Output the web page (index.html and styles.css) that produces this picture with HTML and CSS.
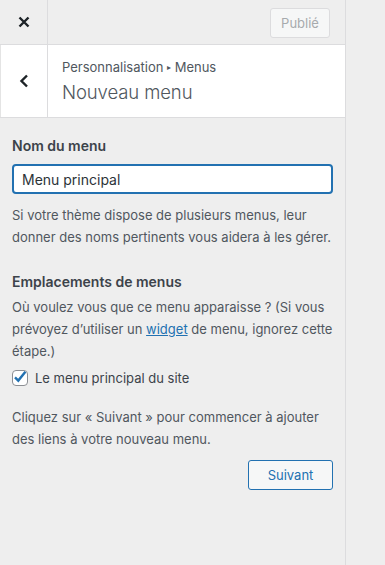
FILE: index.html
```html
<!DOCTYPE html>
<html lang="fr">
<head>
    <meta charset="UTF-8">
    <title>Personnalisation</title>
    <link rel="stylesheet" href="styles.css">
</head>
<body>
    <div class="sidebar">
        <div class="header">
            <button class="close" type="button" aria-label="Fermer">
                <svg width="14" height="14" viewBox="0 0 14 14"><path d="M2.5 2.5 11.5 11.5M11.5 2.5 2.5 11.5" stroke="#1d2327" stroke-width="2.4" stroke-linecap="butt"/></svg>
            </button>
            <div class="header-actions">
                <button class="publish" type="button" disabled>Publié</button>
            </div>
        </div>

        <div class="section-title">
            <button class="back" type="button" aria-label="Retour">
                <svg width="12" height="16" viewBox="0 0 12 16"><path d="M9 2.5 3.5 8 9 13.5" fill="none" stroke="#1d2327" stroke-width="2.4"/></svg>
            </button>
            <div class="title-text">
                <span class="crumb">Personnalisation <span class="arrow">▸</span> Menus</span>
                <h2>Nouveau menu</h2>
            </div>
        </div>

        <div class="content">
            <label class="field-label" for="menu-name">Nom du menu</label>
            <input type="text" id="menu-name" value="Menu principal">
            <p class="desc">Si votre thème dispose de plusieurs menus, leur donner des noms pertinents vous aidera à les gérer.</p>

            <h3>Emplacements de menus</h3>
            <p class="desc">Où voulez vous que ce menu apparaisse ? (Si vous prévoyez d’utiliser un <a href="#">widget</a> de menu, ignorez cette étape.)</p>
            <label class="check">
                <span class="box">
                    <svg width="16" height="16" viewBox="0 0 16 16"><path d="M3 8.4 6.3 11.6 13.4 2.8" fill="none" stroke="#2271b1" stroke-width="2.4"/></svg>
                </span>
                Le menu principal du site
            </label>

            <p class="desc next-hint">Cliquez sur « Suivant » pour commencer à ajouter des liens à votre nouveau menu.</p>
            <div class="actions">
                <button class="next" type="button">Suivant</button>
            </div>
        </div>
    </div>
    <div class="preview"></div>
</body>
</html>
```

FILE: styles.css
```css
body {
    margin: 0;
    display: flex;
    height: 565px;
    overflow: hidden;
    background: #eeeeee;
    font-family: Inter, "Liberation Sans", Arial, sans-serif;
    color: #3c434a;
}
button {
    font-family: inherit;
}
.sidebar {
    width: 345px;
    flex-shrink: 0;
    background: #eeeeee;
    border-right: 1px solid #dcdcde;
}
.preview {
    flex: 1;
}
.header {
    display: flex;
    height: 44px;
    border-bottom: 1px solid #dcdcde;
}
.close {
    width: 48px;
    border: none;
    border-right: 1px solid #dcdcde;
    background: transparent;
    display: flex;
    align-items: center;
    justify-content: center;
    padding: 0;
}
.header-actions {
    flex: 1;
    display: flex;
    justify-content: flex-end;
    align-items: center;
    padding-right: 15px;
}
.publish {
    height: 30px;
    width: 60px;
    margin-top: 1px;
    border: 1px solid #dcdcde;
    border-radius: 3px;
    background: #f6f7f7;
    color: #a7aaad;
    font-size: 13px;
    padding: 0;
}
.section-title {
    display: flex;
    background: #fff;
    height: 72px;
    border-bottom: 1px solid #dcdcde;
}
.back {
    width: 48px;
    border: none;
    border-left: 1px solid #e4e4e4;
    border-right: 1px solid #dcdcde;
    background: #fff;
    display: flex;
    align-items: center;
    justify-content: center;
    padding: 0;
}
.title-text {
    padding: 14px 14px 0;
}
.crumb {
    display: block;
    font-size: 13px;
    color: #50575e;
    line-height: 16px;
}
.arrow {
    font-size: 8px;
    vertical-align: 2px;
}
.title-text h2 {
    margin: 3px 0 0;
    font-size: 18.5px;
    font-weight: 300;
    letter-spacing: -0.1px;
    color: #50575e;
    line-height: 28px;
}
.content {
    padding: 18px 12px;
}
.field-label,
.content h3 {
    display: block;
    font-size: 14px;
    font-weight: 600;
    color: #3c434a;
    margin: 0 0 8px;
    line-height: 20px;
}
.content input {
    display: block;
    box-sizing: border-box;
    width: 100%;
    height: 30px;
    border: 2px solid #2271b1;
    border-radius: 4px;
    padding: 0 8px;
    font-family: inherit;
    font-size: 14px;
    color: #2c3338;
    outline: none;
}
.desc {
    font-size: 13px;
    line-height: 22px;
    margin: 10px 0 0;
    color: #50575e;
}
.content h3 {
    margin-top: 24px;
    margin-bottom: 0;
}
.content h3 + .desc {
    margin-top: 4px;
}
.desc a {
    color: #2271b1;
}
.check {
    display: flex;
    align-items: center;
    gap: 7px;
    font-size: 13px;
    margin-top: 8px;
    color: #3c434a;
}
.box {
    position: relative;
    width: 16px;
    height: 16px;
    box-sizing: border-box;
    border: 1px solid #8c8f94;
    border-radius: 4px;
    background: #fff;
}
.box svg {
    position: absolute;
    left: -1px;
    top: -2px;
}
.next-hint {
    margin-top: 20px;
}
.actions {
    display: flex;
    justify-content: flex-end;
    margin-top: 10px;
}
.next {
    width: 85px;
    height: 30px;
    border: 1px solid #2271b1;
    border-radius: 3px;
    background: #f6f7f7;
    color: #2271b1;
    font-size: 13px;
    padding: 0;
}
```
